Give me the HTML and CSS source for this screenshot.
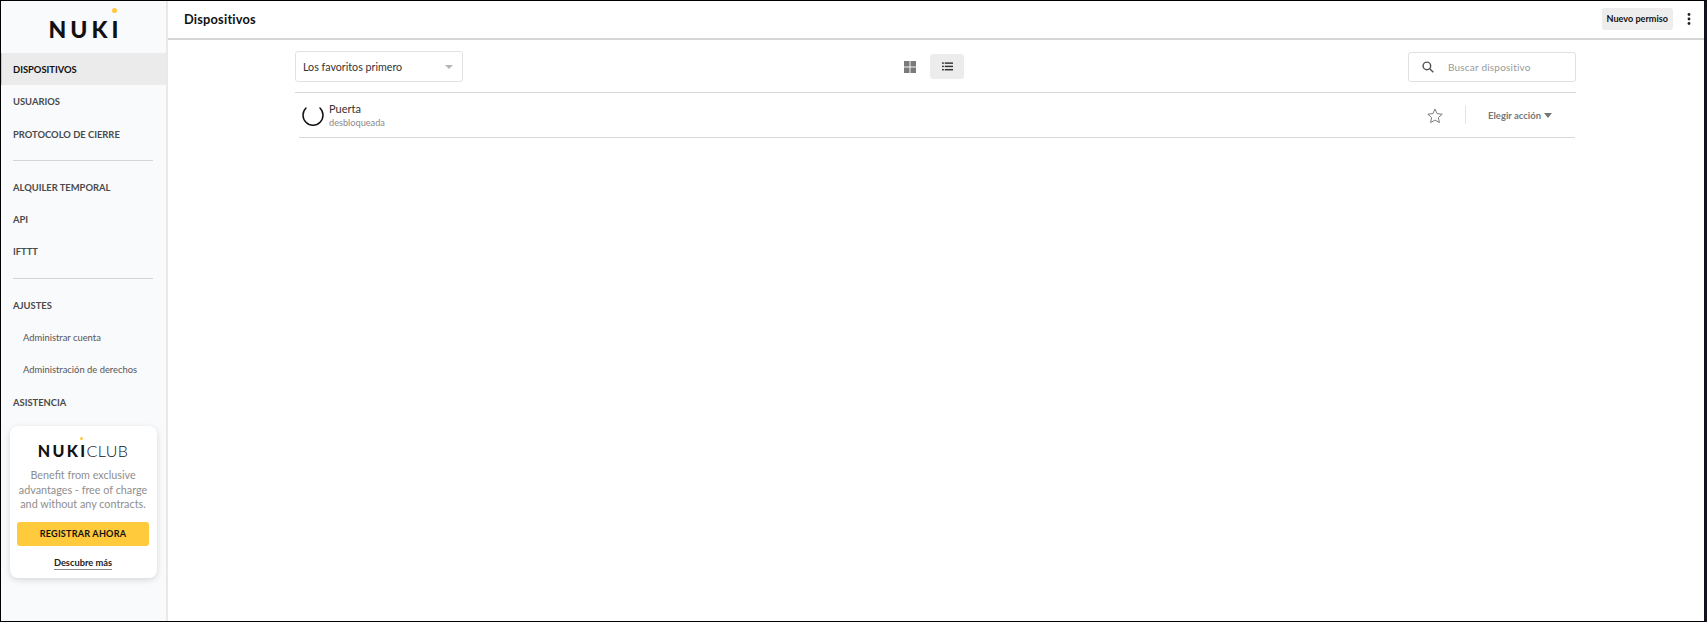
FILE: index.html
```html
<!DOCTYPE html>
<html lang="es">
<head>
    <meta charset="UTF-8">
    <title>Nuki Web</title>
    <link rel="stylesheet" href="styles.css">
</head>
<body>
    <div class="frame">
        <aside class="sidebar">
            <div class="logo">
                <span class="logo-word">NUK<span class="logo-i">I<span class="logo-dot"></span></span></span>
            </div>
            <nav class="nav">
                <a class="nav-item active" href="#">Dispositivos</a>
                <a class="nav-item" href="#">Usuarios</a>
                <a class="nav-item" href="#">Protocolo de cierre</a>
                <hr class="nav-rule">
                <a class="nav-item" href="#">Alquiler temporal</a>
                <a class="nav-item" href="#">API</a>
                <a class="nav-item" href="#">IFTTT</a>
                <hr class="nav-rule">
                <a class="nav-item" href="#">Ajustes</a>
                <a class="nav-item sub" href="#">Administrar cuenta</a>
                <a class="nav-item sub" href="#">Administración de derechos</a>
                <a class="nav-item" href="#">Asistencia</a>
            </nav>
            <div class="club">
                <div class="club-logo">
                    <span class="club-nuki">NUK<span class="logo-i">I<span class="club-dot"></span></span></span><span class="club-word">CLUB</span>
                </div>
                <p class="club-text">Benefit from exclusive advantages - free of charge and without any contracts.</p>
                <a class="club-btn" href="#">Registrar ahora</a>
                <a class="club-link" href="#">Descubre más</a>
            </div>
        </aside>

        <div class="content">
            <header class="topbar">
                <h1 class="title">Dispositivos</h1>
                <a class="new-btn" href="#">Nuevo permiso</a>
                <svg class="dots" width="4" height="12" viewBox="0 0 4 12"><circle cx="2" cy="1.5" r="1.4"/><circle cx="2" cy="6" r="1.4"/><circle cx="2" cy="10.5" r="1.4"/></svg>
            </header>

            <main class="main">
                <div class="toolbar">
                    <div class="select">
                        <span>Los favoritos primero</span>
                        <span class="select-caret"></span>
                    </div>
                    <div class="views">
                        <span class="view">
                            <svg width="12" height="12" viewBox="0 0 13 13" fill="#7a7a7a"><rect width="6" height="6"/><rect x="7" width="6" height="6"/><rect y="7" width="6" height="6"/><rect x="7" y="7" width="6" height="6"/></svg>
                        </span>
                        <span class="view on">
                            <svg width="11" height="9" viewBox="0 0 12 9" fill="#333"><rect width="2" height="1.6"/><rect x="3" width="9" height="1.6"/><rect y="3.6" width="2" height="1.6"/><rect x="3" y="3.6" width="9" height="1.6"/><rect y="7.2" width="2" height="1.6"/><rect x="3" y="7.2" width="9" height="1.6"/></svg>
                        </span>
                    </div>
                    <div class="search">
                        <svg width="12" height="12" viewBox="0 0 14 14" fill="none" stroke="#555" stroke-width="1.7"><circle cx="5.7" cy="5.7" r="4.4"/><path d="M9 9l4.2 4.2"/></svg>
                        <span class="search-text">Buscar dispositivo</span>
                    </div>
                </div>

                <div class="device">
                    <svg class="spinner" width="22" height="22" viewBox="0 0 22 22" fill="none" stroke="#111" stroke-width="1.5" stroke-linecap="round"><path d="M4 4A10 10 0 1 0 18 4"/></svg>
                    <div class="device-info">
                        <div class="device-name">Puerta</div>
                        <div class="device-state">desbloqueada</div>
                    </div>
                    <svg class="star" width="16" height="15" viewBox="0 0 24 23" fill="none" stroke="#666" stroke-width="1.3" stroke-linejoin="round"><path d="M12 1.5l3.2 7.2 7.8.8-5.9 5.2 1.7 7.7L12 18.5l-6.8 3.9 1.7-7.7L1 9.5l7.8-.8z"/></svg>
                    <span class="device-rule"></span>
                    <a class="action" href="#">Elegir acción<span class="action-caret"></span></a>
                </div>
            </main>
        </div>
    </div>
</body>
</html>
```

FILE: styles.css
```css
* {
    box-sizing: border-box;
}

html,
body {
    margin: 0;
    height: 100%;
}

body {
    font-family: 'Lato', sans-serif;
    color: #333;
    background: #000;
    overflow: hidden;
}

a {
    text-decoration: none;
    color: inherit;
}

.frame {
    display: flex;
    height: 622px;
    border-top: 1px solid #000;
    border-bottom: 1px solid #000;
    border-left: 1px solid #000;
    border-right: 3px solid #10131c;
    background: #fff;
}

/* sidebar */
.sidebar {
    width: 167px;
    flex-shrink: 0;
    background: #f9fafc;
    border-right: 2px solid #e9e9e9;
}

.logo {
    height: 52px;
    padding-top: 18px;
    text-align: center;
}

.logo-word {
    font-size: 23px;
    line-height: 20px;
    font-weight: 900;
    letter-spacing: 4px;
    color: #111;
    display: inline-block;
    margin-left: 4px;
}

.logo-i {
    position: relative;
}

.logo-dot {
    position: absolute;
    top: -7px;
    left: 1px;
    width: 5px;
    height: 5px;
    border-radius: 50%;
    background: #ffc93c;
}

.nav-item {
    display: block;
    height: 32.3px;
    line-height: 30.3px;
    padding-top: 2px;
    padding-left: 12px;
    font-size: 9.4px;
    font-weight: 700;
    text-transform: uppercase;
    color: #4a4a4a;
}

.nav-item.active {
    background: #ebebeb;
    border-left: 1px solid #ffc93c;
    padding-left: 11px;
    color: #111;
}

.nav-item.sub {
    padding-left: 22px;
    font-weight: 400;
    text-transform: none;
    color: #555;
}

.nav-rule {
    height: 1px;
    margin: 10px 13px 10px 12px;
    border: 0;
    background: #d4d6d6;
}

.club {
    width: 147px;
    height: 152px;
    margin: 8px 0 0 9px;
    padding: 13px 8px 0 7px;
    background: #fff;
    border-radius: 8px;
    box-shadow: 0 2px 6px rgba(0, 0, 0, .14);
    text-align: center;
}

.club-logo {
    height: 23px;
    line-height: 23px;
    white-space: nowrap;
    color: #111;
}

.club-nuki {
    font-size: 16px;
    font-weight: 900;
    letter-spacing: 2.4px;
}

.club-dot {
    position: absolute;
    top: -4px;
    left: 0;
    width: 3px;
    height: 3px;
    border-radius: 50%;
    background: #ffc93c;
}

.club-word {
    font-size: 16px;
    font-weight: 300;
    letter-spacing: .4px;
    margin-left: -1px;
}

.club-text {
    margin: 6px 0 0;
    font-size: 10.8px;
    line-height: 14.7px;
    color: #8e8e8e;
}

.club-btn {
    display: block;
    height: 24px;
    line-height: 24px;
    margin-top: 10px;
    background: #ffcb3d;
    border-radius: 3px;
    font-size: 9.1px;
    font-weight: 700;
    text-transform: uppercase;
    letter-spacing: .2px;
    color: #111;
}

.club-link {
    display: inline-block;
    margin-top: 11px;
    font-size: 9.3px;
    line-height: 12px;
    font-weight: 700;
    color: #222;
    border-bottom: 1px solid #888;
}

/* top bar */
.content {
    flex: 1;
    min-width: 0;
}

.topbar {
    display: flex;
    align-items: center;
    height: 39px;
    padding: 0 13px 1px 16px;
    border-bottom: 2px solid #d6d6d6;
}

.title {
    flex: 1;
    margin: 0;
    font-size: 12.8px;
    font-weight: 700;
    letter-spacing: .2px;
    color: #111;
}

.new-btn {
    padding: 0 5px;
    height: 22px;
    line-height: 22px;
    background: #ededed;
    border-radius: 3px;
    font-size: 9.1px;
    font-weight: 700;
    color: #111;
}

.dots {
    margin-left: 14px;
    fill: #222;
}

/* devices */
.main {
    width: 1281px;
    margin-left: 127px;
}

.toolbar {
    display: flex;
    align-items: center;
    height: 53px;
    padding-top: 1px;
    border-bottom: 1px solid #d8d8d8;
}

.select {
    display: flex;
    align-items: center;
    justify-content: space-between;
    width: 168px;
    height: 31px;
    padding: 0 9px 0 7px;
    border: 1px solid #e2e2e2;
    border-radius: 3px;
    font-size: 10.7px;
    color: #333;
}

.select-caret {
    width: 0;
    height: 0;
    border-left: 4px solid transparent;
    border-right: 4px solid transparent;
    border-top: 4px solid #b5b5b5;
}

.views {
    display: flex;
    align-items: center;
    gap: 3px;
    margin-left: 430px;
}

.view {
    display: flex;
    align-items: center;
    justify-content: center;
    width: 34px;
    height: 25px;
    border-radius: 3px;
}

.view.on {
    background: #ececec;
}

.search {
    display: flex;
    align-items: center;
    width: 168px;
    height: 30px;
    margin-left: auto;
    padding-left: 13px;
    border: 1px solid #dfdfdf;
    border-radius: 3px;
}

.search-text {
    margin-left: 14px;
    font-size: 10px;
    letter-spacing: .2px;
    color: #999;
}

.device {
    display: flex;
    align-items: center;
    height: 45px;
    margin: 0 1px 0 4px;
    padding-left: 3px;
    border-bottom: 1px solid #d8d8d8;
}

.spinner {
    flex-shrink: 0;
}

.device-info {
    flex: 1;
    margin-left: 5px;
}

.device-name {
    font-size: 11px;
    line-height: 15px;
    color: #333;
}

.device-state {
    font-size: 9.2px;
    line-height: 14px;
    color: #8a8a8a;
}

.device-rule {
    width: 1px;
    height: 18px;
    margin: 0 22px 0 22px;
    background: #e4e4e4;
}

.action {
    display: flex;
    align-items: center;
    width: 87px;
    font-size: 9.5px;
    font-weight: 700;
    color: #777;
}

.action-caret {
    margin-left: 3px;
    width: 0;
    height: 0;
    border-left: 4px solid transparent;
    border-right: 4px solid transparent;
    border-top: 5px solid #777;
}
```
